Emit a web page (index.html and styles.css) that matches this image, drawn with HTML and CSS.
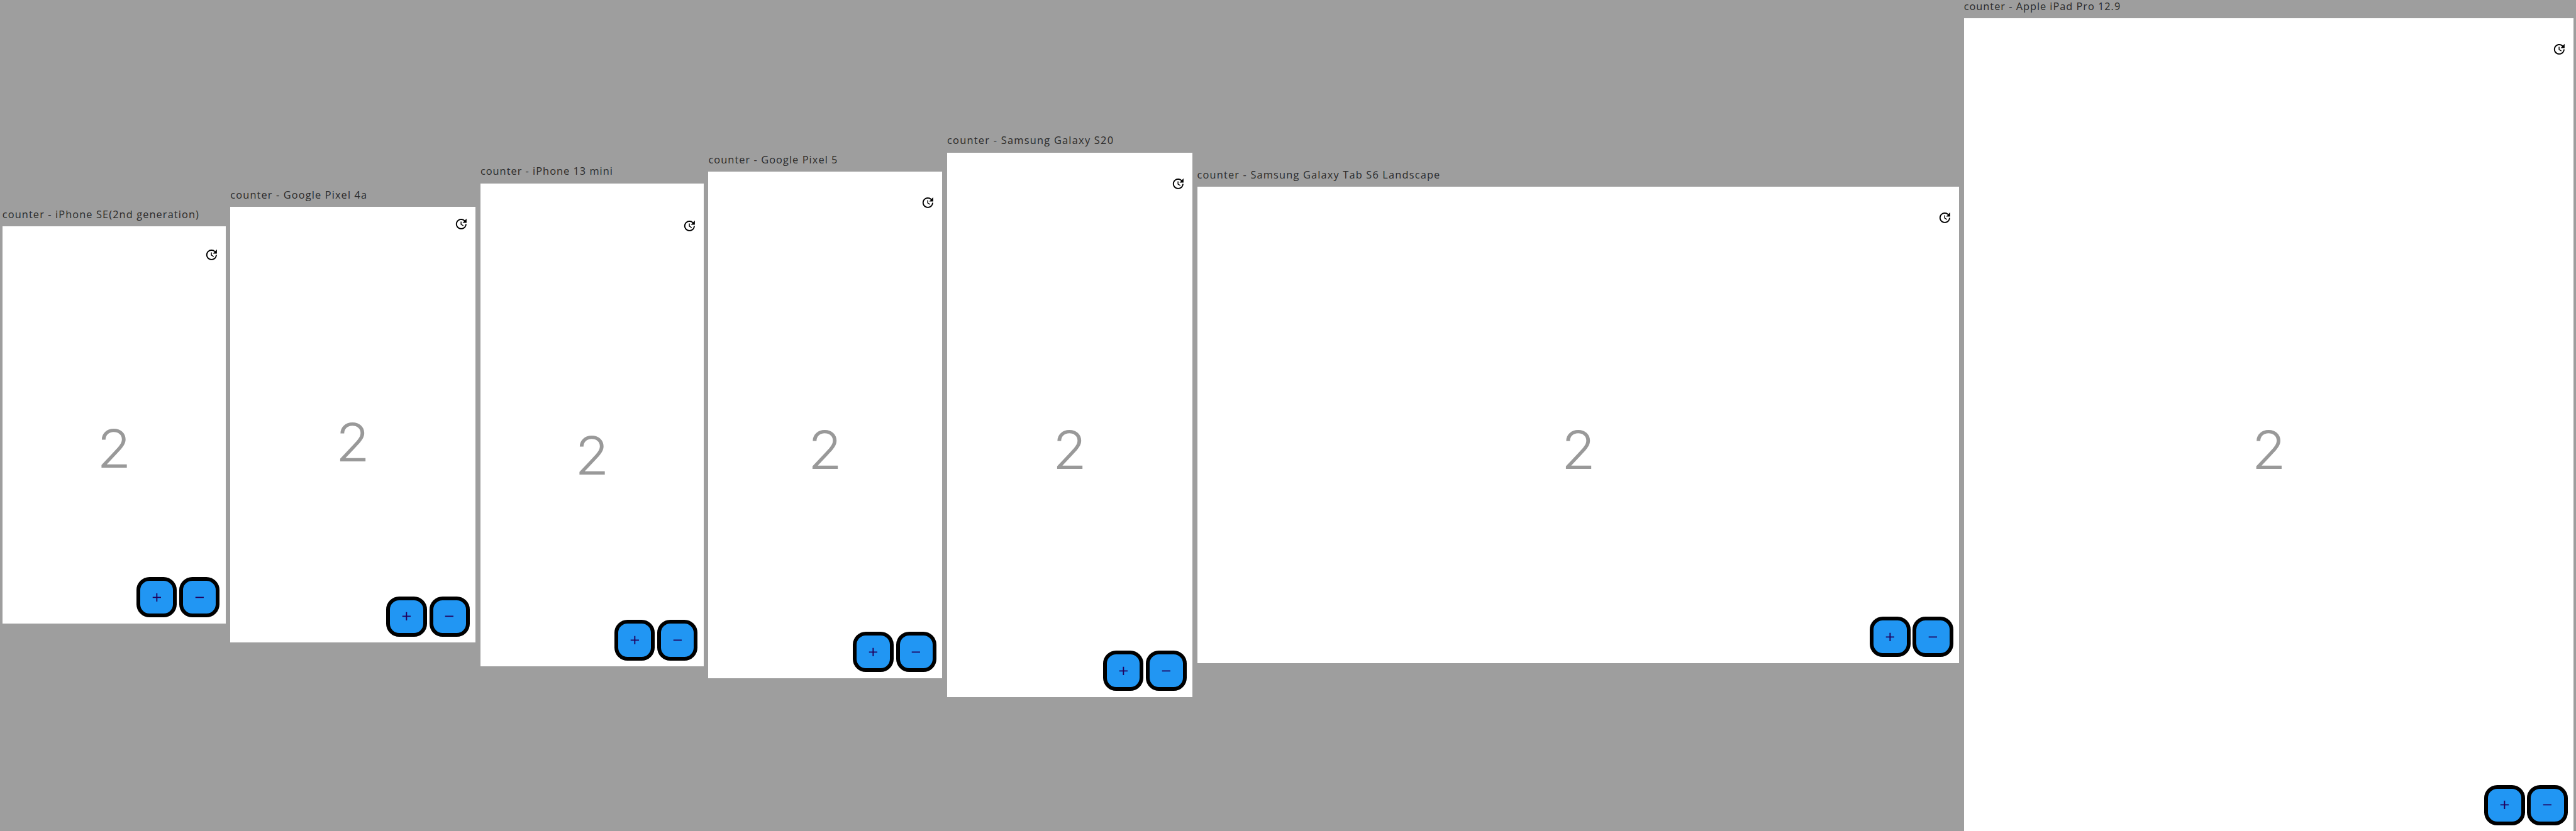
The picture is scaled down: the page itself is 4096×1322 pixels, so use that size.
FILE: index.html
```html
<!DOCTYPE html>
<html lang="en">
<head>
<meta charset="utf-8">
<title>counter</title>
<link rel="stylesheet" href="styles.css">
</head>
<body>
<svg class="symbols" aria-hidden="true">
  <symbol id="update" viewBox="0 0 24 24"><path d="M21 10.12h-6.78l2.74-2.82c-2.73-2.7-7.15-2.8-9.88-.1-2.73 2.71-2.73 7.08 0 9.79 2.73 2.71 7.15 2.71 9.88 0C18.32 15.65 19 14.08 19 12.1h2c0 1.98-.88 4.55-2.64 6.29-3.51 3.48-9.21 3.48-12.72 0-3.5-3.47-3.53-9.11-.02-12.58 3.51-3.47 9.14-3.47 12.65 0L21 3v7.12zM12.5 8v4.25l3.5 2.08-.72 1.21L11 13V8h1.5z"/></symbol>
  <symbol id="add" viewBox="0 0 24 24"><path d="M19 13h-6v6h-2v-6H5v-2h6V5h2v6h6v2z"/></symbol>
  <symbol id="remove" viewBox="0 0 24 24"><path d="M19 13H5v-2h14v2z"/></symbol>
</svg>
<main class="gallery">
  <section class="device iphone-se">
    <h2 class="label">counter - iPhone SE(2nd generation)</h2>
    <div class="screen">
      <header class="appbar"><svg class="icon"><use href="#update"/></svg></header>
      <div class="count">2</div>
      <div class="actions"><button class="fab"><svg class="icon"><use href="#add"/></svg></button><button class="fab"><svg class="icon"><use href="#remove"/></svg></button></div>
    </div>
  </section>
  <section class="device pixel-4a">
    <h2 class="label">counter - Google Pixel 4a</h2>
    <div class="screen">
      <header class="appbar"><svg class="icon"><use href="#update"/></svg></header>
      <div class="count">2</div>
      <div class="actions"><button class="fab"><svg class="icon"><use href="#add"/></svg></button><button class="fab"><svg class="icon"><use href="#remove"/></svg></button></div>
    </div>
  </section>
  <section class="device iphone-13-mini">
    <h2 class="label">counter - iPhone 13 mini</h2>
    <div class="screen">
      <header class="appbar"><svg class="icon"><use href="#update"/></svg></header>
      <div class="count">2</div>
      <div class="actions"><button class="fab"><svg class="icon"><use href="#add"/></svg></button><button class="fab"><svg class="icon"><use href="#remove"/></svg></button></div>
    </div>
  </section>
  <section class="device pixel-5">
    <h2 class="label">counter - Google Pixel 5</h2>
    <div class="screen">
      <header class="appbar"><svg class="icon"><use href="#update"/></svg></header>
      <div class="count">2</div>
      <div class="actions"><button class="fab"><svg class="icon"><use href="#add"/></svg></button><button class="fab"><svg class="icon"><use href="#remove"/></svg></button></div>
    </div>
  </section>
  <section class="device galaxy-s20">
    <h2 class="label">counter - Samsung Galaxy S20</h2>
    <div class="screen">
      <header class="appbar"><svg class="icon"><use href="#update"/></svg></header>
      <div class="count">2</div>
      <div class="actions"><button class="fab"><svg class="icon"><use href="#add"/></svg></button><button class="fab"><svg class="icon"><use href="#remove"/></svg></button></div>
    </div>
  </section>
  <section class="device galaxy-tab">
    <h2 class="label">counter - Samsung Galaxy Tab S6 Landscape</h2>
    <div class="screen">
      <header class="appbar"><svg class="icon"><use href="#update"/></svg></header>
      <div class="count">2</div>
      <div class="actions"><button class="fab"><svg class="icon"><use href="#add"/></svg></button><button class="fab"><svg class="icon"><use href="#remove"/></svg></button></div>
    </div>
  </section>
  <section class="device ipad-pro">
    <h2 class="label">counter - Apple iPad Pro 12.9</h2>
    <div class="screen">
      <header class="appbar"><svg class="icon"><use href="#update"/></svg></header>
      <div class="count">2</div>
      <div class="actions"><button class="fab"><svg class="icon"><use href="#add"/></svg></button><button class="fab"><svg class="icon"><use href="#remove"/></svg></button></div>
    </div>
  </section>
</main>
</body>
</html>
```
FILE: styles.css
```css
/* 1rem = 10 device-independent pixels of the gallery */
html { font-size: 9.46614px; }
* { box-sizing: border-box; }
body {
  margin: 0;
  height: 100vh;
  overflow: hidden;
  background: #9e9e9e;
  font-family: "Open Sans", "Noto Sans", sans-serif;
}
.symbols { display: none; }
.gallery {
  display: flex;
  align-items: center;
  gap: .8rem;
  height: 139.7rem;
  padding: 0 .4rem;
}
.device { flex: none; width: var(--w); --safe: 2.4rem; }
.iphone-se { --w: 37.5rem; --h: 66.7rem; --safe: 2rem; --track: .116rem; }
.pixel-4a { --w: 41.2rem; --h: 73.2rem; --safe: 0rem; --track: .119rem; }
.iphone-13-mini { --w: 37.5rem; --h: 81.2rem; --safe: 4.4rem; --track: .106rem; }
.pixel-5 { --w: 39.3rem; --h: 85.1rem; --track: .112rem; }
.galaxy-s20 { --w: 41.2rem; --h: 91.5rem; --track: .132rem; }
.galaxy-tab { --w: 128rem; --h: 80rem; --track: .123rem; }
.ipad-pro { --w: 102.4rem; --h: 136.6rem; --track: .102rem; }
.label {
  height: 3.1rem;
  margin: 0;
  font-size: 1.73rem;
  font-weight: 400;
  line-height: 2.3rem;
  letter-spacing: var(--track);
  white-space: nowrap;
  color: #2a2a2a;
}
.screen {
  position: relative;
  display: flex;
  flex-direction: column;
  height: var(--h);
  padding-top: var(--safe);
  background: #fff;
}
.appbar {
  display: flex;
  flex: none;
  align-items: center;
  justify-content: flex-end;
  height: 5.6rem;
  padding-right: 1.2rem;
}
.icon { display: block; width: 2.4rem; height: 2.4rem; fill: currentColor; }
.count {
  display: flex;
  flex: 1;
  align-items: center;
  justify-content: center;
  padding-top: .2rem;
  font-family: Inter, "Open Sans", sans-serif;
  font-size: 8.9rem;
  font-weight: 300;
  line-height: 1;
  color: #999;
  transform: scaleX(1.05);
}
.actions {
  position: absolute;
  right: 1rem;
  bottom: 1rem;
  display: flex;
  gap: .4rem;
}
.fab {
  display: flex;
  align-items: center;
  justify-content: center;
  width: 6.8rem;
  height: 6.8rem;
  padding: 0;
  border: 6px solid #000;
  border-radius: 2.2rem;
  background: #2196f3;
  color: #21005d;
}
```
